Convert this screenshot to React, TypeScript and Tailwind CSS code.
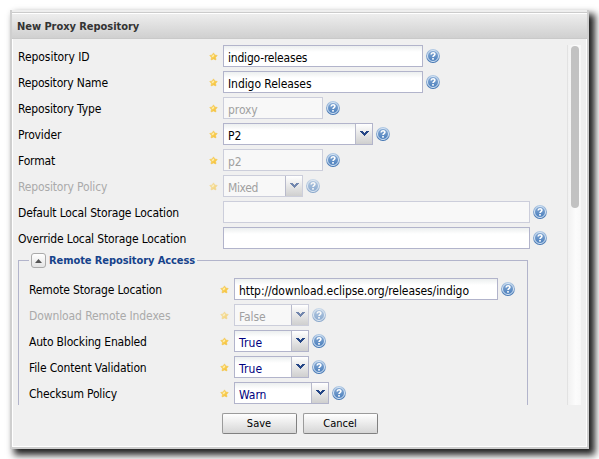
import React from 'react';

const Star = () => (
  <svg viewBox="0 0 9 9" className="block h-[9px] w-[9px] shrink-0">
    <defs>
      <linearGradient id="gold" x1="0" y1="0" x2="1" y2="1">
        <stop offset="0" stopColor="#ffe58c" />
        <stop offset="1" stopColor="#f4ba22" />
      </linearGradient>
    </defs>
    <path d="M4.5 .9 5.7 3 8.2 3.5 6.6 5.3 6.9 7.9 4.5 6.9 2.1 7.9 2.4 5.3 .8 3.5 3.3 3Z" fill="url(#gold)" stroke="#f3c54e" strokeWidth=".7" strokeLinejoin="round" />
    <path d="M4.5 2.5 5.2 4 3.3 5.2 3 4Z" fill="#fff2b5" />
  </svg>
);

const Help = () => (
  <svg viewBox="0 0 14 14" className="ml-[3px] block h-[14px] w-[14px] shrink-0">
    <defs>
      <linearGradient id="ring" x1="0" y1="0" x2="0" y2="1">
        <stop offset="0" stopColor="#b3cbe5" />
        <stop offset="1" stopColor="#3d71b0" />
      </linearGradient>
      <linearGradient id="disc" x1="0" y1="0" x2="0" y2="1">
        <stop offset="0" stopColor="#85a9d3" />
        <stop offset="1" stopColor="#4b7fbd" />
      </linearGradient>
    </defs>
    <circle cx="7" cy="7" r="6.9" fill="url(#ring)" />
    <circle cx="7" cy="7" r="5.5" fill="url(#disc)" stroke="#d6e5f5" strokeWidth="1" />
    <path d="M5.1 5.5C5.2 3.2 8.9 3.2 8.9 5.3 8.9 6.6 7.1 6.7 7 8" fill="none" stroke="#fff" strokeWidth="1.6" />
    <rect x="6.1" y="9.1" width="1.8" height="1.5" fill="#fff" />
  </svg>
);

type RowProps = {
  label: string;
  labelSpacing?: string;
  value?: string;
  spacing?: string;
  width: string;
  star?: boolean;
  select?: boolean;
  disabled?: boolean;
  faded?: boolean;
  blue?: boolean;
};

function Row({ label, labelSpacing = 'tracking-[-0.15px]', value = '', spacing = 'tracking-[-0.07px]', width, star = true, select, disabled, faded, blue }: RowProps) {
  const color = disabled ? 'text-[#a0a0a0]' : blue ? 'text-[#000080]' : 'text-black';
  const fill = disabled
    ? 'border-[#cccedb] bg-[#f8f8f8]'
    : 'border-[#b2b4cb] bg-linear-to-b from-[#ecefef] from-0% via-white via-30% to-white';
  return (
    <div className="mb-1 flex h-[22px] shrink-0 items-center">
      <div className={`w-[191px] shrink-0 pt-[2px] leading-[22px] whitespace-nowrap ${labelSpacing} ${faded ? 'text-[#aaa]' : 'text-black'}`}>{label}</div>
      <div className={`w-[14px] shrink-0 ${faded ? 'opacity-60' : ''}`}>{star && <Star />}</div>
      <div className={`flex h-[22px] shrink-0 border ${fill} ${width}`}>
        <div className={`min-w-0 grow pt-[2px] pl-1 leading-[20px] whitespace-nowrap ${spacing} ${color}`}>{value}</div>
        {select && (
          <div className="flex w-[17px] shrink-0 items-center justify-center border-l border-[#b8bacb] bg-linear-to-b from-white to-[#cfcfcf]">
            <svg viewBox="0 0 9 6" className={`mb-px h-[6px] w-[9px] ${faded ? 'opacity-60' : ''}`}>
              <path d="M0 0h3v1h1v1h1V1h1V0h3v1H8v1H7v1H6v1H5v1H4V4H3V3H2V2H1V1H0Z" fill="#254686" />
            </svg>
          </div>
        )}
      </div>
      <div className={faded ? 'opacity-60' : ''}><Help /></div>
    </div>
  );
}

const Button = ({ children }: { children: React.ReactNode }) => (
  <div className="flex h-[21px] w-[75px] items-center justify-center rounded-[2px] border border-[#9b9b9b] border-r-[#808080] border-b-[#808080] bg-linear-to-b from-white to-[#d6d6d6] pt-[2px] text-[11px] text-black">
    {children}
  </div>
);

export default function App() {
  return (
    <div className="h-[459px] w-[599px] overflow-hidden bg-white p-[10px] font-['DejaVu_Sans_Condensed','DejaVu_Sans',sans-serif] text-[12px] [font-stretch:condensed]">
      <div className="flex h-[439px] w-[579px] flex-col border-x-2 border-b-2 border-[#cfcfcf] bg-[#f0f0f0] shadow-[5px_5px_7px_1px_#222]">
        <div className="h-[3px] shrink-0 border-b border-[#cbcbcb] bg-[#eee]" />
        <div className="h-[26px] shrink-0 border-t border-b border-t-white border-b-[#c9c9c9] bg-linear-to-b from-[#ededed] to-[#d0d0d0] pl-[5px] text-[11px] leading-[25px] font-bold tracking-[-0.05px] text-[#333]">
          New Proxy Repository
        </div>
        <div className="flex grow flex-col border-x border-b border-white">
          <div className="mt-[6px] flex h-[360px] shrink-0 overflow-hidden pl-[5px]">
            <div className="w-[549px] shrink-0">
              <Row label="Repository ID" labelSpacing="tracking-[-0.05px]" value="indigo-releases" spacing="tracking-[-0.2px]" width="w-[200px]" />
              <Row label="Repository Name" labelSpacing="tracking-[-0.18px]" value="Indigo Releases" width="w-[200px]" />
              <Row label="Repository Type" value="proxy" width="w-[100px]" disabled />
              <Row label="Provider" value="P2" width="w-[150px]" select />
              <Row label="Format" value="p2" width="w-[100px]" disabled />
              <Row label="Repository Policy" value="Mixed" spacing="tracking-[-0.4px]" width="w-[80px]" disabled faded select />
              <Row label="Default Local Storage Location" width="w-[307px]" star={false} disabled />
              <Row label="Override Local Storage Location" width="w-[307px]" star={false} />
              <div className="mt-[11px] h-[180px] w-[510px] border border-[#b2b4cb] pl-[10px]">
                <div className="-mt-[8px] mb-[10px] flex h-[15px] items-center">
                  <div className="flex h-[15px] items-center bg-[#f0f0f0] px-[2px]">
                    <div className="flex h-[15px] w-[15px] items-center justify-center rounded-[3px] border border-[#aaa] bg-linear-to-b from-white to-[#e4e4e4]">
                      <svg viewBox="0 0 7 4" className="h-[4px] w-[7px]"><path d="M3.5 0 7 4H0Z" fill="#555" /></svg>
                    </div>
                    <div className="pt-[2px] pl-[3px] text-[11px] font-bold tracking-[-0.08px] whitespace-nowrap text-[#15428b]">Remote Repository Access</div>
                  </div>
                </div>
                <Row label="Remote Storage Location" value="http://download.eclipse.org/releases/indigo" width="w-[264px]" />
                <Row label="Download Remote Indexes" labelSpacing="tracking-[-0.1px]" value="False" width="w-[75px]" select disabled faded />
                <Row label="Auto Blocking Enabled" labelSpacing="tracking-[-0.18px]" value="True" spacing="tracking-[0.1px]" width="w-[75px]" select blue />
                <Row label="File Content Validation" value="True" spacing="tracking-[0.1px]" width="w-[75px]" select blue />
                <Row label="Checksum Policy" labelSpacing="tracking-[-0.18px]" value="Warn" width="w-[95px]" select blue />
              </div>
            </div>
            <div className="w-[14px] border-l border-[#e2e2e2] bg-linear-to-r from-[#f1f1f1] via-[#fcfcfc] via-60% to-[#f8f8f8] pt-px pl-[3px]">
              <div className="h-[162px] w-[8px] rounded-full bg-[#c2c2c2]" />
            </div>
          </div>
          <div className="mt-[8px] flex justify-center gap-[6px]">
            <Button>Save</Button>
            <Button>Cancel</Button>
          </div>
        </div>
      </div>
    </div>
  );
}
